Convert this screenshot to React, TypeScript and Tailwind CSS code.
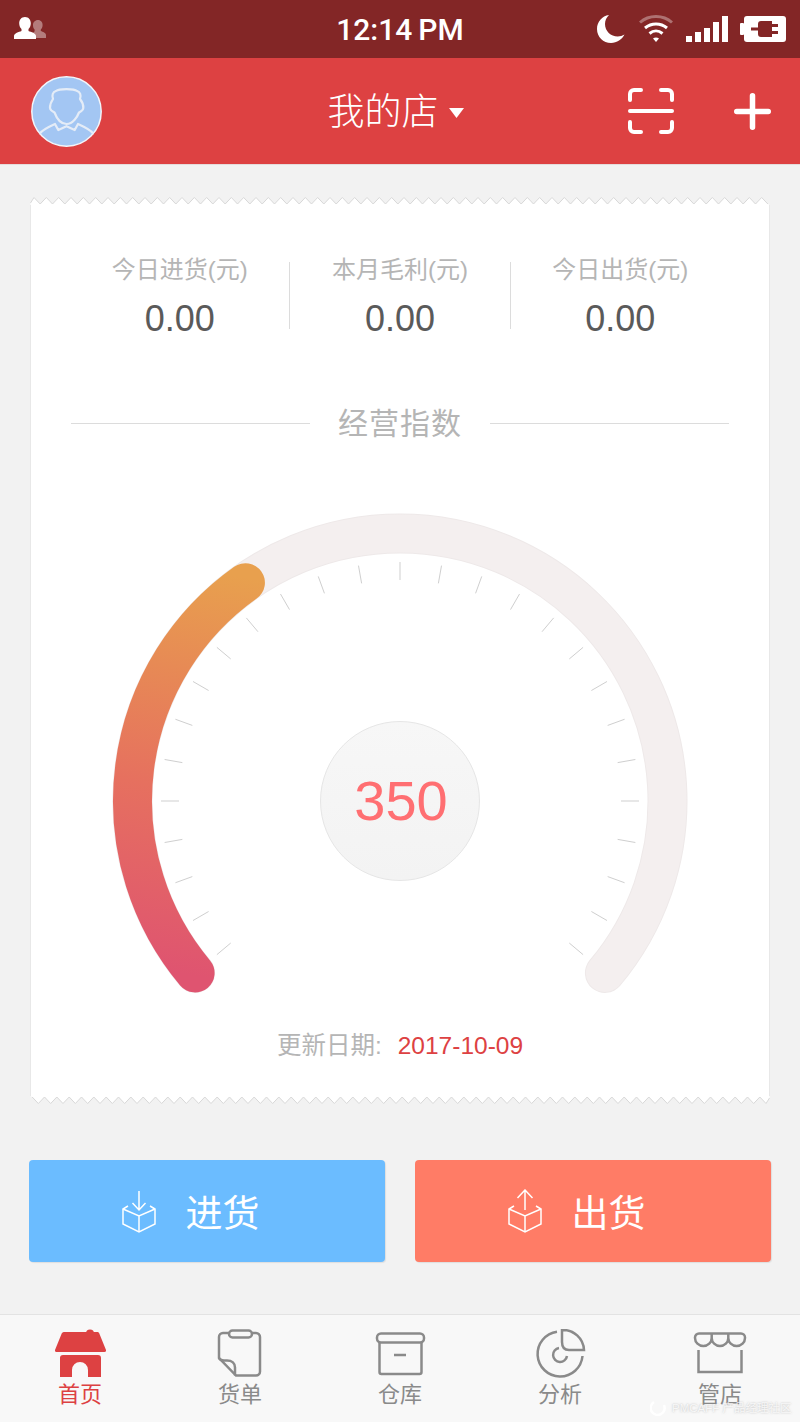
import React from "react";

const CX = 300;
const CY = 296;
const R = 267.5;

// angle in degrees, 0 at twelve o'clock, negative to the left
const polar = (deg: number, r: number) => {
  const a = (deg * Math.PI) / 180;
  return { x: CX + r * Math.sin(a), y: CY - r * Math.cos(a) };
};

const arcPath = (from: number, to: number) => {
  const s = polar(from, R);
  const e = polar(to, R);
  const large = Math.abs(to - from) > 180 ? 1 : 0;
  return `M${s.x} ${s.y} A${R} ${R} 0 ${large} 1 ${e.x} ${e.y}`;
};

const ticks = Array.from({ length: 27 }, (_, i) => -130 + i * 10);

const Gauge = () => (
  <div className="relative mx-auto mt-[62px] h-[500px] w-[600px]">
    <svg width="600" height="500" viewBox="0 0 600 500" fill="none">
      <defs>
        <linearGradient id="gaugeFill" gradientUnits="userSpaceOnUse" x1="90" y1="470" x2="160" y2="75">
          <stop offset="0" stopColor="#df5470" />
          <stop offset="0.45" stopColor="#e6705f" />
          <stop offset="0.75" stopColor="#e78a55" />
          <stop offset="1" stopColor="#e8a04e" />
        </linearGradient>
      </defs>
      <path d={arcPath(-130, 130)} stroke="#eee9e9" strokeWidth="40" strokeLinecap="round" />
      <path d={arcPath(-130, 130)} stroke="#f4efef" strokeWidth="38" strokeLinecap="round" />
      <path d={arcPath(-130, -35.3)} stroke="url(#gaugeFill)" strokeWidth="39" strokeLinecap="round" />
      {ticks.map((deg) => {
        const a = polar(deg, 221);
        const b = polar(deg, 239);
        return <line key={deg} x1={a.x} y1={a.y} x2={b.x} y2={b.y} stroke="#cfcfcf" strokeWidth="1" />;
      })}
    </svg>
    <div className="absolute left-[220px] top-[216px] flex h-[160px] w-[160px] items-center justify-center rounded-full border border-[#e6e6e6] bg-gradient-to-b from-[#f7f7f7] to-[#f3f3f3]">
      <span className="translate-x-px text-[56px] leading-none text-[#ff6f72]">350</span>
    </div>
  </div>
);

// saw-tooth edge of the receipt card
const Zigzag = ({ flip }: { flip?: boolean }) => {
  const n = 60;
  const step = 740 / n;
  let line = "M0.5 6";
  for (let i = 0; i < n; i++) {
    line += ` L${i * step + 4} 0.5 L${i * step + 4 + step / 2} 7`;
  }
  return (
    <svg width="740" height="8" viewBox="0 0 740 8" className={flip ? "block rotate-180" : "block"}>
      <path d={`${line} L739.5 8 L0.5 8 Z`} fill="#ffffff" />
      <path d={line} fill="none" stroke="#d8d8d8" strokeWidth="1" />
    </svg>
  );
};

const Stat = ({ label }: { label: string }) => (
  <div className="flex flex-1 flex-col items-center">
    <span className="text-[24px] leading-[28px] text-[#b5b5b5]">{label}</span>
    <span className="mt-[14px] text-[36px] leading-[42px] text-[#5a5a5a]">0.00</span>
  </div>
);

const StatusBar = () => (
  <div className="grid h-[58px] shrink-0 grid-cols-3 items-center bg-[#832626] text-white">
    <svg width="34" height="24" viewBox="0 0 34 24" className="ml-[14px]" fill="currentColor">
      <path opacity="0.4" d="M24 3c3 0 4.600 2.400 4.600 5 0 2-.8 3.600-1.800 4.600v1.400c2 .8 5.200 1.700 5.200 4v3H20c-.4-2-2-3.200-3.400-4 1.500-.8 4-1.500 4-2.900v-1.500c-1-1-1.600-2.600-1.600-4.600C19 5.400 21 3 24 3z" />
      <path d="M11 0c3.800 0 5.800 3 5.800 6.300 0 2.500-1 4.600-2.300 5.800v2c2.600 1 7.500 2.200 7.500 5V22H0v-2.900c0-2.800 4.900-4 7.500-5v-2C6.200 10.900 5.200 8.800 5.200 6.300 5.200 3 7.200 0 11 0z" />
    </svg>
    <div className="flex items-center justify-center gap-[6px] pt-px font-['Roboto'] text-[30px] font-medium leading-none">
      <span>12:14</span>
      <span>PM</span>
    </div>
    <div className="flex items-center justify-end pr-[14px]">
      <svg width="30" height="30" viewBox="0 0 30 30" fill="currentColor">
        <path d="M13 1C6 2 1 7.800 1 15c0 8 6.300 14 14 14 6 0 11-3.600 13.500-8.500-2 1.300-4.300 2-6.800 2C14.800 22.500 9 17 9 10c0-3.500 1.500-6.700 4-9z" />
      </svg>
      <svg width="36" height="30" viewBox="0 0 36 30" fill="none" stroke="currentColor" strokeWidth="3" className="ml-[12px]">
        <path opacity="0.35" d="M2 8.500C11 0.500 25 0.500 34 8.500" />
        <path d="M7 14c6.500-5.500 15.500-5.500 22 0" />
        <path d="M11.500 19.500c4-3.300 9-3.300 13 0" />
        <path d="M15 24.500l3 3.500 3-3.500c-1.800-1.300-4.200-1.300-6 0z" fill="currentColor" stroke="none" />
      </svg>
      <svg width="42" height="26" viewBox="0 0 42 26" fill="currentColor" className="ml-[12px]">
        <rect x="0" y="20" width="6" height="6" />
        <rect x="9" y="16" width="6" height="10" />
        <rect x="18" y="12" width="6" height="14" />
        <rect x="27" y="6" width="6" height="20" />
        <rect x="36" y="0" width="6" height="26" />
      </svg>
      <svg width="46" height="26" viewBox="0 0 46 26" className="ml-[12px]">
        <rect x="0" y="7" width="4" height="12" rx="1" fill="#ffffff" />
        <rect x="4" y="0" width="42" height="26" rx="3" fill="#ffffff" />
        <path d="M11 11.500h7V8c0-2 1-3 3-3h11v3h6v3h-6v4h6v3h-6v3H21c-2 0-3-1-3-3v-3.500h-7z" fill="#832626" />
      </svg>
    </div>
  </div>
);

const Header = () => (
  <div className="grid h-[107px] shrink-0 grid-cols-[1fr_auto_1fr] items-center border-b border-[#e5dcdc] bg-[#dd4142] text-white">
    <div className="pl-[31px]">
      <svg width="71" height="71" viewBox="0 0 71 71" fill="none">
        <circle cx="35.500" cy="35.500" r="34.700" fill="#a3c6f3" stroke="#f2f5fa" strokeWidth="1.500" />
        <g stroke="#e4ecf7" strokeWidth="2.200" strokeLinejoin="round" strokeLinecap="round">
          {/* hair and face */}
          <path d="M22 23c-1.500-4 0-7 3-8 3-2.500 18-2.500 21 0 3 1 4.500 4 3 8 2 2.500 3.500 6 3.300 9-.2 2.500-2.500 3.500-4.300 4.500-1.500 4-6 11.500-12.500 11.500S25 40.500 23.500 36.500c-2-1-4.300-2-4.500-4.500-.2-3 1.300-6.500 3-9z" />
          {/* shirt collar and shoulders */}
          <path d="M9 57.300c3-4 10-7 15-9.300l3.300 6 8.200-3.800 8.200 3.800 3.300-6c5 2.300 12 5.300 15 9.300" />
        </g>
      </svg>
    </div>
    <div className="mr-[9px] flex items-center">
      <span className="-mt-[3px] font-['Noto_Sans_CJK_SC'] text-[37px] font-light leading-none">我的店</span>
      <svg width="15" height="10" viewBox="0 0 15 10" className="ml-[10px] mt-[4px]" fill="currentColor">
        <path d="M0 0h15l-7.500 10z" />
      </svg>
    </div>
    <div className="flex items-center justify-end pr-[29px]">
      <svg width="46" height="46" viewBox="0 0 46 46" fill="none" stroke="currentColor" strokeWidth="4" strokeLinecap="round">
        <path d="M2 12V6a4 4 0 0 1 4-4h7" />
        <path d="M33 2h7a4 4 0 0 1 4 4v6" />
        <path d="M2 34v6a4 4 0 0 0 4 4h7" />
        <path d="M33 44h7a4 4 0 0 0 4-4v-6" />
        <path d="M2 23h42" />
      </svg>
      <svg width="37" height="37" viewBox="0 0 37 37" className="ml-[60px]" fill="none" stroke="currentColor" strokeWidth="5.500" strokeLinecap="round">
        <path d="M18.500 2.750v31.500M2.750 18.500h31.500" />
      </svg>
    </div>
  </div>
);

const BoxIn = () => (
  <svg width="34" height="44" viewBox="0 0 34 44" fill="none" stroke="#ffffff" strokeWidth="1.500">
    <path d="M17 2v19M10.500 14l6.500 7 6.500-7" />
    <path d="M6 17l-5 3v15l16 8 16-8V20l-5-3" />
    <path d="M1 20l16 7 16-7M17 27v16" />
  </svg>
);

const BoxOut = () => (
  <svg width="34" height="44" viewBox="0 0 34 44" fill="none" stroke="#ffffff" strokeWidth="1.500">
    <path d="M17 1v20M9.500 9L17 1l7.500 8" />
    <path d="M6 17l-5 3v15l16 8 16-8V20l-5-3" />
    <path d="M1 20l16 7 16-7M17 27v16" />
  </svg>
);

const tabs: { label: string; icon: React.ReactNode; active?: boolean }[] = [
  {
    label: "首页",
    active: true,
    icon: (
      <svg width="60" height="50" viewBox="0 0 60 50" fill="#dd4142">
        <circle cx="40" cy="4.500" r="4" />
        <path d="M15 3h32c1.500 0 2 .5 2.500 2L56 21c.3 1-.3 2-1.500 2h-48c-1.200 0-1.800-1-1.500-2L11.500 5c.5-1.500 1.500-2 3.500-2z" />
        <path d="M13 26h35a3 3 0 0 1 3 3v19H38v-7a8 8 0 0 0-16 0v7H10V29a3 3 0 0 1 3-3z" />
      </svg>
    ),
  },
  {
    label: "货单",
    icon: (
      <svg width="60" height="50" viewBox="0 0 60 50" fill="none" stroke="#8a8a8a" strokeWidth="2.500">
        <rect x="19" y="1.500" width="23" height="7" rx="3.500" />
        <path d="M19 4h-6a4 4 0 0 0-4 4v21l17 17.500h20a4 4 0 0 0 4-4V8a4 4 0 0 0-4-4h-4" />
        <path d="M9 29c1 2 2 2.500 5 2.500h3c5 0 8 3 8 7v8" />
      </svg>
    ),
  },
  {
    label: "仓库",
    icon: (
      <svg width="60" height="50" viewBox="0 0 60 50" fill="none" stroke="#8a8a8a" strokeWidth="2.500">
        <rect x="7" y="4.500" width="47" height="9" rx="4" />
        <path d="M9.500 13.500V43a2 2 0 0 0 2 2h38a2 2 0 0 0 2-2V13.500" />
        <path d="M24 26h12" />
      </svg>
    ),
  },
  {
    label: "分析",
    icon: (
      <svg width="60" height="50" viewBox="0 0 60 50" fill="none" stroke="#8a8a8a" strokeWidth="2.500">
        <path d="M32 1v12q0 8 7 8h15A21 21 0 0 0 32 1z" />
        <path d="M27 2.700A22.500 22.500 0 1 0 52.500 27" />
        <path d="M29 19A7 7 0 1 0 37 27" />
      </svg>
    ),
  },
  {
    label: "管店",
    icon: (
      <svg width="60" height="50" viewBox="0 0 60 50" fill="none" stroke="#8a8a8a" strokeWidth="2.500">
        <path d="M9 4.500h42a4 4 0 0 1 4 4V9a8.300 8 0 0 1-16.700 0 8.300 8 0 0 1-16.600 0A8.300 8 0 0 1 5 9v-.5a4 4 0 0 1 4-4z" />
        <path d="M21.700 4.500V9M38.300 4.500V9" />
        <path d="M8.500 21v22h43V21" />
      </svg>
    ),
  },
];

const TabBar = () => (
  <div className="relative mt-auto flex h-[108px] shrink-0 border-t border-[#e3e3e3] bg-[#f8f8f8]">
    {tabs.map((tab) => (
      <div key={tab.label} className="flex flex-1 flex-col items-center pt-[14px]">
        {tab.icon}
        <span className={tab.active ? "mt-px text-[22px] leading-[30px] text-[#dd4142]" : "mt-px text-[22px] leading-[30px] text-[#8a8a8a]"}>
          {tab.label}
        </span>
      </div>
    ))}
    {/* site watermark sitting over the last tab */}
    <div className="absolute left-[650px] top-[83px] flex items-center gap-[6px] whitespace-nowrap text-[11.500px] leading-[20px] text-white/80 [text-shadow:0_0_2px_rgba(120,120,120,0.5)]">
      <svg width="16" height="16" viewBox="0 0 16 16" fill="none" stroke="#ffffff" strokeWidth="2.500">
        <path d="M4 2a7 7 0 1 0 10 3" />
      </svg>
      <span>PMCAFF 产品经理社区</span>
    </div>
  </div>
);

export default function App() {
  return (
    <div className="flex h-[1422px] w-[800px] flex-col overflow-hidden bg-[#f2f2f2] font-['Liberation_Sans','Noto_Sans_CJK_SC',sans-serif]">
      <StatusBar />
      <Header />

      <div className="mx-[30px] mt-[32px] w-[740px]">
        <Zigzag />
        <div className="border-x border-[#e8e8e8] bg-white pb-[34px] pt-[51px]">
          <div className="flex px-[39px]">
            <Stat label="今日进货(元)" />
            <div className="mt-[6px] h-[67px] w-px bg-[#dcdcdc]" />
            <Stat label="本月毛利(元)" />
            <div className="mt-[6px] h-[67px] w-px bg-[#dcdcdc]" />
            <Stat label="今日出货(元)" />
          </div>

          <div className="mt-[63px] flex items-center gap-[28px] px-[40px]">
            <div className="h-px flex-1 bg-[#dcdcdc]" />
            <span className="translate-y-px text-[30px] leading-[40px] tracking-[1px] text-[#b5b5b5]">经营指数</span>
            <div className="h-px flex-1 bg-[#dcdcdc]" />
          </div>

          <Gauge />

          <div className="mt-[25px] flex justify-center text-[24.500px] leading-[32px]">
            <span className="text-[#b5b5b5]">更新日期:</span>
            <span className="ml-[16px] text-[#dd4142]">2017-10-09</span>
          </div>
        </div>
        <Zigzag flip />
      </div>

      <div className="mt-[56px] flex gap-[30px] px-[29px]">
        <button className="flex h-[102px] flex-1 items-center justify-center gap-[30px] rounded-[4px] bg-[#6bbcff] pr-[33px] text-white shadow-[1px_1px_1px_rgba(0,0,0,0.08)]">
          <BoxIn />
          <span className="mt-[6px] text-[37px] leading-none">进货</span>
        </button>
        <button className="flex h-[102px] flex-1 items-center justify-center gap-[30px] rounded-[4px] bg-[#ff7c66] pr-[33px] text-white shadow-[1px_1px_1px_rgba(0,0,0,0.08)]">
          <BoxOut />
          <span className="mt-[6px] text-[37px] leading-none">出货</span>
        </button>
      </div>

      <TabBar />
    </div>
  );
}
